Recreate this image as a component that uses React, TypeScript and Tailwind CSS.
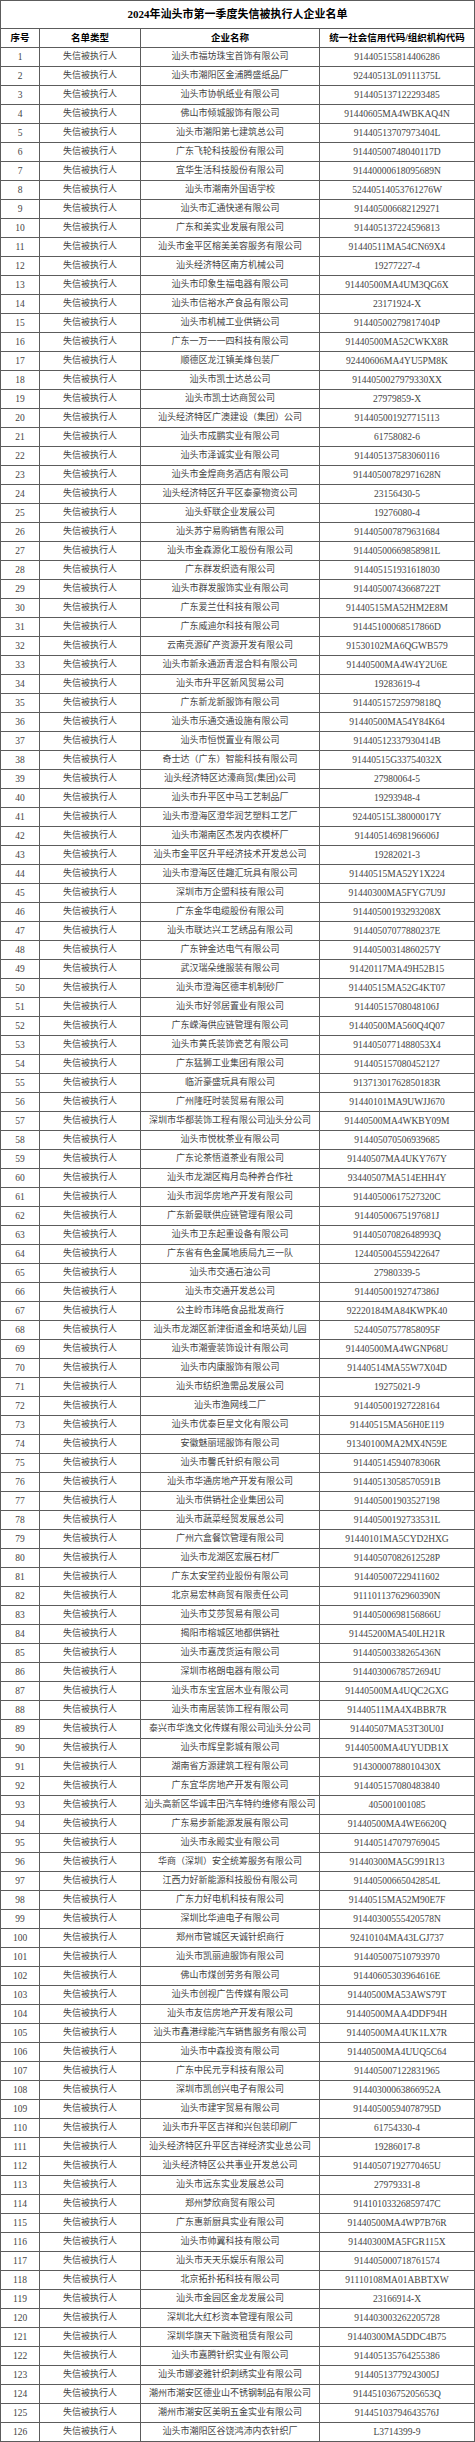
import React from "react";

const RAW = `汕头市福坊珠宝首饰有限公司|914405155814406286
汕头市潮阳区金浦腾盛纸品厂|92440513L09111375L
汕头市协帆纸业有限公司|914405137122293485
佛山市倾城服饰有限公司|91440605MA4WBKAQ4N
汕头市潮阳第七建筑总公司|91440513707973404L
广东飞轮科技股份有限公司|91440500748040117D
宜华生活科技股份有限公司|91440000618095689N
汕头市潮南外国语学校|52440514053761276W
汕头市汇通快递有限公司|914405006682129271
广东和美实业发展有限公司|914405137224596813
汕头市金平区榕美美容服务有限公司|91440511MA54CN69X4
汕头经济特区南方机械公司|19277227-4
汕头市印象生福电器有限公司|91440500MA4UM3QG6X
汕头市信裕水产食品有限公司|23171924-X
汕头市机械工业供销公司|91440500279817404P
广东一万一一四科技有限公司|91440500MA52CWKX8R
顺德区龙江镇美烽包装厂|92440606MA4YU5PM8K
汕头市凯士达总公司|9144050027979330XX
汕头市凯士达商贸公司|27979859-X
汕头经济特区广澳建设（集团）公司|914405001927715113
汕头市成鹏实业有限公司|61758082-6
汕头市泽诚实业有限公司|914405137583060116
汕头市金煌商务酒店有限公司|91440500782971628N
汕头经济特区升平区泰豪物资公司|23156430-5
汕头虾联企业发展公司|19276080-4
汕头苏宁易购销售有限公司|914405007879631684
汕头市金森源化工股份有限公司|91440500669858981L
广东群发织造有限公司|914405151931618030
汕头市群发服饰实业有限公司|91440500743668722T
广东爱兰仕科技有限公司|91440515MA52HM2E8M
广东威迪尔科技有限公司|91445100068517866D
云南亮源矿产资源开发有限公司|91530102MA6QGWB579
汕头市新永通沥青混合料有限公司|91440500MA4W4Y2U6E
汕头市升平区新风贸易公司|19283619-4
广东新龙新服饰有限公司|91440515725979818Q
汕头市乐通交通设施有限公司|91440500MA54Y84K64
汕头市恒悦置业有限公司|91440512337930414B
奇士达（广东）智能科技有限公司|91440515G33754032X
汕头经济特区达濠商贸(集团)公司|27980064-5
汕头市升平区中马工艺制品厂|19293948-4
汕头市澄海区澄华润艺塑料工艺厂|92440515L38000017Y
汕头市潮南区杰发内衣模杯厂|91440514698196606J
汕头市金平区升平经济技术开发总公司|19282021-3
汕头市澄海区佳趣汇玩具有限公司|91440515MA52Y1X224
深圳市万企盟科技有限公司|91440300MA5FYG7U9J
广东金华电缆股份有限公司|91440500193293208X
汕头市联达兴工艺绣品有限公司|91440507077880237E
广东钟金达电气有限公司|91440500314860257Y
武汉瑞朵维服装有限公司|91420117MA49H52B15
汕头市澄海区德丰机制砂厂|91440515MA52G4KT07
汕头市好邻居置业有限公司|91440515708048106J
广东嵘海供应链管理有限公司|91440500MA560Q4Q07
汕头市黄氏装饰瓷艺有限公司|9144050771488053X4
广东猛狮工业集团有限公司|914405157080452127
临沂豪盛玩具有限公司|91371301762850183R
广州隆旺时装贸易有限公司|91440101MA9UWJJ670
深圳市华都装饰工程有限公司汕头分公司|91440500MA4WKBY09M
汕头市悦枕茶业有限公司|914405070506939685
广东论茶悟道茶业有限公司|91440507MA4UKY767Y
汕头市龙湖区梅月岛种养合作社|93440507MA514EHH4Y
汕头市润华房地产开发有限公司|91440500617527320C
广东新晏联供应链管理有限公司|91440500675197681J
汕头市卫东起重设备有限公司|91440507082648993Q
广东省有色金属地质局九三一队|124405004559422647
汕头市交通石油公司|27980339-5
汕头市交通开发总公司|91440500192747386J
公主岭市玮皓食品批发商行|92220184MA84KWPK40
汕头市龙湖区新津街道金和培英幼儿园|52440507577858095F
汕头市潮壹装饰设计有限公司|91440500MA4WGNP68U
汕头市内康服饰有限公司|91440514MA55W7X04D
汕头市纺织渔需品发展公司|19275021-9
汕头市渔网线二厂|914405001927228164
汕头市优泰巨星文化有限公司|91440515MA56H0E119
安徽魅丽瑶服饰有限公司|91340100MA2MX4N59E
汕头市馨氏针织有限公司|91440514594078306R
汕头市华通房地产开发有限公司|91440513058570591B
汕头市供销社企业集团公司|914405001903527198
汕头市蔬菜经贸发展总公司|91440500192733531L
广州六盒餐饮管理有限公司|91440101MA5CYD2HXG
汕头市龙湖区宏展石材厂|91440507082612528P
广东太安堂药业股份有限公司|914405007229411602
北京易宏林商贸有限责任公司|91110113762960390N
汕头市艾莎贸易有限公司|91440500698156866U
揭阳市榕城区地都供销社|91445200MA540LH21R
汕头市嘉茂货运有限公司|91440500338265436N
深圳市格朗电器有限公司|91440300678572694U
汕头市东宝宜居木业有限公司|91440500MA4UQC2GXG
汕头市南居装饰工程有限公司|91440511MA4X4BBR7R
泰兴市华逸文化传媒有限公司汕头分公司|91440507MA53T30U0J
汕头市辉皇影城有限公司|91440500MA4UYUDB1X
湖南省方源建筑工程有限公司|91430000788010430X
广东宜华房地产开发有限公司|914405157080483840
汕头高新区华诚丰田汽车特约维修有限公司|405001001085
广东易步新能源发展有限公司|91440500MA4WE6620Q
汕头市永殿实业有限公司|914405147079769045
华商（深圳）安全统筹服务有限公司|91440300MA5G991R13
江西力好新能源科技股份有限公司|91440500665042854L
广东力好电机科技有限公司|91440515MA52M90E7F
深圳比华迪电子有限公司|91440300555420578N
郑州市管城区天诚针织商行|92410104MA43LGJ737
汕头市凯丽迪服饰有限公司|914405007510793970
佛山市煤创劳务有限公司|91440605303964616E
汕头市创视广告传媒有限公司|91440500MA53AWS79T
汕头市友信房地产开发有限公司|91440500MAA4DDF94H
汕头市鑫港绿能汽车销售服务有限公司|91440500MA4UK1LX7R
汕头市中森投资有限公司|91440500MA4UUQ5C64
广东中民元亨科技有限公司|914405007122831965
深圳市凯创兴电子有限公司|91440300063866952A
汕头市建宇贸易有限公司|91440500594078795D
汕头市升平区吉祥和兴包装印刷厂|61754330-4
汕头经济特区升平区吉祥经济实业总公司|19286017-8
汕头经济特区公共事业开发总公司|91440507192770465U
汕头市远东实业发展总公司|27979331-8
郑州梦欣商贸有限公司|91410103326859747C
广东惠新厨具实业有限公司|91440500MA4WP7B76R
汕头市帅翼科技有限公司|91440300MA5FGR115X
汕头市天天乐娱乐有限公司|914405000718761574
北京拓扑拓科技有限公司|91110108MA01ABBTXW
汕头市金园区金龙发展公司|23166914-X
深圳北大红杉资本管理有限公司|914403003262205728
深圳华旗天下融资租赁有限公司|91440300MA5DDC4B75
汕头市嘉腾针织实业有限公司|914405135764255386
汕头市娜姿雅针织刺绣实业有限公司|91440513779243005J
潮州市潮安区德业山不锈钢制品有限公司|91445103675205653Q
潮州市潮安区美明五金实业有限公司|91445103794643576J
汕头市潮阳区谷饶鸿沛内衣针织厂|L3714399-9`;

const rows = RAW.split("\n").map((l) => {
  const [name, code] = l.split("|");
  return { name, code };
});

const FONT = "[font-family:'Liberation_Serif','Noto_Sans_CJK_SC',serif]";

export default function App() {
  return (
    <div className="w-[475px] bg-white">
      <div
        className={`grid grid-cols-[38px_100px_178px_154px] gap-px bg-[#5c5c5c] p-px ${FONT}`}
      >
        <div className="col-span-4 flex h-[27px] items-center justify-center bg-white text-[11px] font-bold text-black">
          2024年汕头市第一季度失信被执行人企业名单
        </div>
        <div className="flex h-[18px] items-center justify-center bg-white text-[9.5px] font-bold text-black">
          序号
        </div>
        <div className="flex h-[18px] items-center justify-center bg-white text-[9.5px] font-bold text-black">
          名单类型
        </div>
        <div className="flex h-[18px] items-center justify-center bg-white text-[9.5px] font-bold text-black">
          企业名称
        </div>
        <div className="flex h-[18px] items-center justify-center bg-white text-[9.5px] font-bold text-black">
          统一社会信用代码/组织机构代码
        </div>
        {rows.map((r, i) => (
          <React.Fragment key={i}>
            <div className="flex h-[18px] items-center justify-center bg-white text-[9.5px] text-[#444]">
              {i + 1}
            </div>
            <div className="flex h-[18px] items-center justify-center bg-white text-[9px] text-[#444]">
              失信被执行人
            </div>
            <div className="flex h-[18px] items-center justify-center whitespace-nowrap bg-white text-[9px] text-[#444]">
              {r.name}
            </div>
            <div className="flex h-[18px] items-center justify-center whitespace-nowrap bg-white text-[9.5px] text-[#444]">
              {r.code}
            </div>
          </React.Fragment>
        ))}
      </div>
    </div>
  );
}
